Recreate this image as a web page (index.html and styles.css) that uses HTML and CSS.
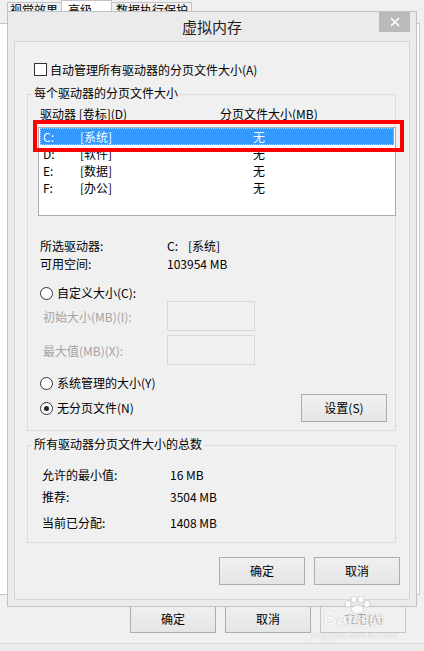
FILE: index.html
```html
<!DOCTYPE html>
<html lang="zh-CN">
<head>
<meta charset="utf-8">
<title>虚拟内存</title>
<link rel="stylesheet" href="styles.css">
</head>
<body>
<div class="parent">
  <div class="tabs">
    <div class="tab t1">视觉效果</div>
    <div class="tab t2 active">高级</div>
    <div class="tab t3">数据执行保护</div>
  </div>
  <div class="page"></div>
  <div class="parent-buttons">
    <div class="btn">确定</div>
    <div class="btn">取消</div>
    <div class="btn disabled">应用(A)</div>
  </div>
  <div class="status"></div>
</div>

<div class="dialog">
  <div class="titlebar">
    <span class="title">虚拟内存</span>
    <span class="close"><svg width="10" height="10" viewBox="0 0 10 10"><path d="M1 1 L9 9 M9 1 L1 9" stroke="#fff" stroke-width="1.7" fill="none"/></svg></span>
  </div>
  <div class="client">
    <div class="auto-row"><span class="checkbox"></span><span>自动管理所有驱动器的分页文件大小(A)</span></div>

    <fieldset class="group g1">
      <legend>每个驱动器的分页文件大小</legend>
      <div class="colhead"><span>驱动器 [卷标](D)</span><span>分页文件大小(MB)</span></div>
      <div class="listbox">
        <div class="row sel"><span>C:</span><span>[系统]</span><span>无</span></div>
        <div class="row"><span>D:</span><span>[软件]</span><span>无</span></div>
        <div class="row"><span>E:</span><span>[数据]</span><span>无</span></div>
        <div class="row"><span>F:</span><span>[办公]</span><span>无</span></div>
      </div>
      <div class="info">
        <span>所选驱动器:</span><span>C:<span class="gap"></span>[系统]</span>
        <span>可用空间:</span><span>103954 MB</span>
      </div>
      <div class="radio-row r-custom"><span class="radio"></span><span>自定义大小(C):</span></div>
      <div class="field f1"><span class="flabel">初始大小(MB)(I):</span><span class="textbox"></span></div>
      <div class="field f2"><span class="flabel">最大值(MB)(X):</span><span class="textbox"></span></div>
      <div class="radio-row r-sys"><span class="radio"></span><span>系统管理的大小(Y)</span></div>
      <div class="radio-row r-none">
        <span class="rgroup"><span class="radio checked"></span><span>无分页文件(N)</span></span>
        <span class="btn set">设置(S)</span>
      </div>
    </fieldset>

    <fieldset class="group g2">
      <legend>所有驱动器分页文件大小的总数</legend>
      <div class="trow tr1"><span>允许的最小值:</span><span>16 MB</span></div>
      <div class="trow tr2"><span>推荐:</span><span>3504 MB</span></div>
      <div class="trow tr3"><span>当前已分配:</span><span>1408 MB</span></div>
    </fieldset>

    <div class="dlg-buttons">
      <span class="btn">确定</span>
      <span class="btn">取消</span>
    </div>
  </div>
</div>

<div class="highlight"></div>

<div class="watermark">
  <svg class="paw" width="30" height="18" viewBox="0 0 30 18">
    <g fill="rgba(255,255,255,0.9)" stroke="rgba(120,120,120,0.35)" stroke-width="0.8">
      <ellipse cx="6" cy="8" rx="3" ry="3.6"/>
      <ellipse cx="12" cy="3.5" rx="3" ry="3.4"/>
      <ellipse cx="19" cy="3.5" rx="3" ry="3.4"/>
      <ellipse cx="25" cy="8" rx="3" ry="3.6"/>
      <ellipse cx="15.5" cy="13.5" rx="6" ry="4.5"/>
    </g>
  </svg>
  <div class="wm-main"><span class="wm-bai">Bai</span><span class="wm-jy">经验</span></div>
  <div class="wm-url">jingyan.baidu.com</div>
</div>
</body>
</html>
```
FILE: styles.css
```css
* { box-sizing: border-box; }

html, body {
  margin: 0;
  padding: 0;
}

body {
  width: 424px;
  height: 651px;
  overflow: hidden;
  position: relative;
  background: #f0f0f0;
  font-family: "Noto Sans CJK SC", "Noto Sans", sans-serif;
  font-size: 12px;
  color: #000;
}

/* ---------- parent window ---------- */
.parent {
  display: flex;
  flex-direction: column;
  height: 651px;
}

.tabs {
  height: 23px;
  display: flex;
  align-items: flex-end;
  padding-left: 7px;
}

.tab {
  height: 21px;
  border: 1px solid #c4c4c4;
  border-bottom: none;
  background: #f0f0f0;
  line-height: 14px;
  white-space: nowrap;
  overflow: hidden;
  color: #000;
}

.t1 { width: 54px; padding-left: 2px; border-right: none; }
.t2 { width: 51px; padding-left: 6px; height: 23px; background: #fff; padding-top: 2px; }
.t3 { width: 80px; padding-left: 4px; border-left: none; }

.page {
  height: 572px;
  margin-left: -1px;
  width: 421px;
  background: #fff;
  border: 1px solid #c8c8c8;
}

.parent-buttons {
  margin-top: 10px;
  display: flex;
  justify-content: flex-end;
  gap: 9px;
  padding-right: 18px;
}

.btn {
  width: 86px;
  height: 28px;
  display: flex;
  align-items: center;
  justify-content: center;
  border: 1px solid #acacac;
  background: linear-gradient(#f0f0f0, #e5e5e5);
  line-height: 14px;
}

.btn.disabled {
  color: #a0a0a0;
  border-color: #c6c6c6;
  background: #f0f0f0;
}

.status {
  margin-top: 10px;
  flex: 1;
  border-top: 1px solid #d6d6d6;
  background: #ececec;
}

/* ---------- dialog ---------- */
.dialog {
  position: absolute;
  left: 7px;
  top: 11px;
  width: 410px;
  height: 596px;
  border: 1px solid #c2c2c2;
  background: #ebebeb;
  padding: 0 6px 6px;
  display: flex;
  flex-direction: column;
}

.titlebar {
  height: 29px;
  flex: none;
  display: grid;
  grid-template-columns: 1fr auto 1fr;
  margin: 0 -6px;
}

.title {
  grid-column: 2;
  align-self: center;
  font-size: 15px;
  line-height: 18px;
  color: #1e1e1e;
}

.close {
  grid-column: 3;
  justify-self: end;
  align-self: start;
  width: 31px;
  height: 20px;
  margin-right: 6px;
  background: #bababa;
  display: flex;
  align-items: center;
  justify-content: center;
}

.client {
  flex: 1;
  border: 1px solid #d6d6d6;
  background: #f0f0f0;
  padding: 0 13px 0 12px;
  display: flex;
  flex-direction: column;
}

.auto-row {
  margin: 21px 0 0 7px;
  height: 13px;
  line-height: 13px;
  display: flex;
  align-items: center;
  gap: 3px;
}

.checkbox {
  width: 13px;
  height: 13px;
  border: 1px solid #333;
  background: #fff;
  flex: none;
}

.group {
  margin: 0;
  padding: 0;
  min-width: 0;
  border: 1px solid #dcdcdc;
}

.group legend {
  margin-left: 4px;
  padding: 0 2px 2px;
  line-height: 14px;
}

.g1 { margin-top: 10px; padding-bottom: 8px; }
.g2 { margin-top: 6px; padding-bottom: 10px; }

.colhead {
  margin-top: 3px;
  height: 17px;
  line-height: 17px;
  padding-left: 12px;
  display: grid;
  grid-template-columns: 180px auto;
}

.listbox {
  margin: 5px -1px 0 10px;
  height: 89px;
  border: 1px solid #abadb3;
  background: #fff;
  padding: 0 1px;
}

.row {
  height: 17px;
  line-height: 17px;
  display: grid;
  grid-template-columns: 37px 173px auto;
  padding-left: 3px;
}

.row.sel {
  background: #3399ff;
  color: #fff;
  outline: 1px dotted rgba(255, 255, 255, 0.55);
  outline-offset: -1px;
}

.info {
  margin-top: 21px;
  padding-left: 12px;
  display: grid;
  grid-template-columns: 127px auto;
  line-height: 18px;
}

.gap { display: inline-block; width: 10px; }

.radio-row {
  padding-left: 12px;
  display: flex;
  align-items: center;
  gap: 4px;
  height: 16px;
  line-height: 16px;
}

.r-custom { margin-top: 12px; }
.r-sys { margin-top: 10px; }
.r-none {
  margin-top: 3px;
  height: 28px;
  justify-content: space-between;
  padding-right: 8px;
}

.rgroup {
  display: flex;
  align-items: center;
  gap: 4px;
}

.radio {
  width: 13px;
  height: 13px;
  border: 1px solid #333;
  border-radius: 50%;
  background: #fff;
  flex: none;
  display: flex;
  align-items: center;
  justify-content: center;
}

.radio.checked::after {
  content: "";
  width: 5px;
  height: 5px;
  border-radius: 50%;
  background: #222;
}

.field {
  display: flex;
  align-items: center;
  height: 30px;
  padding-left: 15px;
  color: #a3a3a3;
}

.f2 { margin-top: 4px; }

.flabel { width: 124px; }

.textbox {
  width: 88px;
  height: 30px;
  border: 1px solid #d9d9d9;
  background: #f0f0f0;
}

.trow {
  padding-left: 14px;
  display: grid;
  grid-template-columns: 128px auto;
  line-height: 18px;
}

.tr1 { margin-top: 13px; }
.tr2 { margin-top: 4px; }
.tr3 { margin-top: 8px; }

.dlg-buttons {
  margin: 14px -4px 0 0;
  display: flex;
  justify-content: flex-end;
  gap: 9px;
}

/* ---------- overlays ---------- */
.highlight {
  position: absolute;
  left: 33px;
  top: 120px;
  width: 371px;
  height: 32px;
  border: 4px solid #ff0000;
}

.watermark {
  position: absolute;
  left: 306px;
  top: 596px;
  width: 96px;
  display: flex;
  flex-direction: column;
  align-items: center;
  color: rgba(255, 255, 255, 0.9);
  text-shadow: 0 0 1px rgba(110, 110, 110, 0.45);
}

.paw { margin-left: 6px; }

.wm-main {
  display: flex;
  align-items: baseline;
  gap: 2px;
  margin-top: -4px;
  line-height: 18px;
}

.wm-bai {
  font-family: "Liberation Sans", Arial, sans-serif;
  font-weight: bold;
  font-size: 19px;
}

.wm-jy { font-size: 15px; }

.wm-url {
  font-family: "Liberation Serif", serif;
  font-size: 11px;
  line-height: 12px;
  letter-spacing: 0.3px;
}
```
